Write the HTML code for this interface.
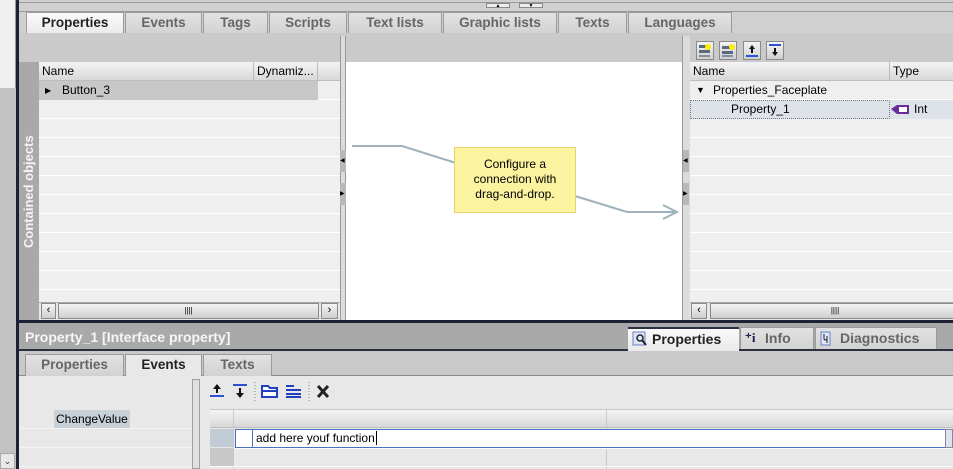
<!DOCTYPE html>
<html><head><meta charset="utf-8"><style>
*{margin:0;padding:0;box-sizing:border-box}
body{width:953px;height:469px;overflow:hidden;background:#d4d4d4;font-family:"Liberation Sans",Tahoma,sans-serif;font-size:12px;color:#000;position:relative}
.a{position:absolute}
.tab{position:absolute;height:22px;border:1px solid #9a9a9a;border-bottom:none;background:linear-gradient(#e2e2e2,#d2d2d2);color:#666;font-weight:bold;font-size:13.5px;text-align:center;line-height:20px}
.tab.on{background:linear-gradient(#fafafa,#eaeaea);color:#222}
.rows{background-color:#efefef;background-image:repeating-linear-gradient(to bottom,transparent 0,transparent 18px,#fff 18px,#fff 19px)}
.hdr{background:linear-gradient(#f4f4f4,#d8d8d8);border-bottom:1px solid #bdbdbd;font-size:12px;line-height:18px}
.btn{position:absolute;width:18px;height:19px;border:1px solid #8a8a8a;background:linear-gradient(#f4f4f4,#cfcfcf)}
</style></head><body>
<div class="a" style="left:0;top:0;width:16px;height:88px;background:#f0f0f0;border-right:1px solid #999"></div>
<div class="a" style="left:0;top:88px;width:16px;height:381px;background:#c2c2c2"></div>
<div class="a" style="left:0;top:453px;width:15px;height:16px;background:#e8e8e8;border:1px solid #aaa;font-size:9px;text-align:center;line-height:14px;color:#333">⌄</div>
<div class="a" style="left:16px;top:0;width:3px;height:469px;background:#1c2233"></div>
<div class="a" style="left:19px;top:0;width:934px;height:12px;background:#d0d0d0;border-bottom:1px solid #999"></div>
<div class="a" style="left:19px;top:2px;width:934px;height:1px;background:#999"></div>
<div class="a" style="left:486px;top:3px;width:24px;height:5px;border:1px solid #888;background:#eee;font-size:5px;text-align:center;line-height:4px">▲</div>
<div class="a" style="left:519px;top:3px;width:24px;height:5px;border:1px solid #888;background:#eee;font-size:5px;text-align:center;line-height:4px">▼</div>
<div class="a" style="left:19px;top:12px;width:934px;height:22px;background:#d0d0d0"></div>
<div class="tab on" style="left:26px;top:12px;width:98px;height:22px">Properties</div>
<div class="tab" style="left:125px;top:12px;width:77px">Events</div>
<div class="tab" style="left:203px;top:12px;width:65px">Tags</div>
<div class="tab" style="left:269px;top:12px;width:78px">Scripts</div>
<div class="tab" style="left:348px;top:12px;width:94px">Text lists</div>
<div class="tab" style="left:443px;top:12px;width:114px">Graphic lists</div>
<div class="tab" style="left:558px;top:12px;width:69px">Texts</div>
<div class="tab" style="left:628px;top:12px;width:104px">Languages</div>
<div class="a" style="left:19px;top:33px;width:934px;height:29px;background:#cacaca"></div>
<div class="a" style="left:19px;top:62px;width:20px;height:258px;background:#a9a9a9"></div>
<div class="a" style="left:19px;top:248px;height:20px;transform-origin:0 0;transform:rotate(-90deg);white-space:nowrap;color:#f4f4f4;font-weight:bold;font-size:13px;line-height:20px;width:130px">Contained objects</div>
<div class="a hdr" style="left:39px;top:62px;width:301px;height:19px"></div>
<div class="a" style="left:42px;top:62px;line-height:19px">Name</div>
<div class="a" style="left:253px;top:62px;width:65px;height:19px;border-left:1px solid #bbb;border-right:1px solid #bbb;padding-left:3px;line-height:19px">Dynamiz...</div>
<div class="a rows" style="left:39px;top:81px;width:301px;height:221px"></div>
<div class="a" style="left:39px;top:81px;width:279px;height:19px;background:#c8c8c8"></div>
<div class="a" style="left:45px;top:81px;line-height:19px;font-size:8px">▶</div>
<div class="a" style="left:62px;top:81px;line-height:19px">Button_3</div>
<div class="a" style="left:39px;top:302px;width:301px;height:18px;background:#e8e8e8;border-top:1px solid #aaa"></div>
<div class="btn" style="left:41px;top:303px;width:15px;height:16px;font-size:11px;line-height:13px;text-align:center">‹</div>
<div class="btn" style="left:58px;top:303px;width:261px;height:16px;font-size:8px;line-height:14px;text-align:center">||||</div>
<div class="btn" style="left:321px;top:303px;width:17px;height:16px;font-size:11px;line-height:13px;text-align:center">›</div>
<div class="a" style="left:340px;top:36px;width:6px;height:284px;background:#dcdcdc;border-left:1px solid #999;border-right:1px solid #999"></div>
<div class="a" style="left:340px;top:150px;width:6px;height:22px;background:#b8b8b8;font-size:6px;line-height:22px">◀</div>
<div class="a" style="left:340px;top:183px;width:6px;height:22px;background:#b8b8b8;font-size:6px;line-height:22px">▶</div>
<div class="a" style="left:346px;top:62px;width:336px;height:258px;background:#fff"></div>
<svg class="a" style="left:346px;top:62px" width="336" height="258">
<polyline points="6,84 56,84 110,101" fill="none" stroke="#9fb2bc" stroke-width="2"/>
<polyline points="229,134 281,150 331,150" fill="none" stroke="#9fb2bc" stroke-width="2"/>
<polyline points="317,143 331,150 317,157" fill="none" stroke="#9fb2bc" stroke-width="2"/>
</svg>
<div class="a" style="left:454px;top:147px;width:122px;height:66px;background:#fcf3a0;border:1px solid #e2d56a;text-align:center;font-size:12px;line-height:15px;padding-top:9px">Configure a<br>connection with<br>drag-and-drop.</div>
<div class="a" style="left:682px;top:36px;width:8px;height:284px;background:#dcdcdc;border-left:1px solid #999"></div>
<div class="a" style="left:683px;top:150px;width:6px;height:22px;background:#b8b8b8;font-size:6px;line-height:22px">◀</div>
<div class="a" style="left:683px;top:183px;width:6px;height:22px;background:#b8b8b8;font-size:6px;line-height:22px">▶</div>
<div class="btn" style="left:696px;top:41px"><svg width="16" height="17"><rect x="2" y="3" width="11" height="3" fill="#5a6a80"/><rect x="2" y="8" width="11" height="3" fill="#5a6a80"/><rect x="2" y="13" width="11" height="2" fill="#8090a0"/><circle cx="11" cy="5" r="3" fill="#ffee00"/></svg></div>
<div class="btn" style="left:719px;top:41px"><svg width="16" height="17"><rect x="2" y="4" width="8" height="3" fill="#5a6a80"/><rect x="2" y="9" width="11" height="3" fill="#5a6a80"/><rect x="2" y="13" width="11" height="2" fill="#8090a0"/><circle cx="12" cy="5" r="3" fill="#ffee00"/></svg></div>
<div class="btn" style="left:743px;top:41px"><svg width="16" height="17"><path d="M8 3L5 7H7V11H9V7H11Z" fill="#111"/><rect x="2" y="13" width="12" height="2" fill="#3050d0"/></svg></div>
<div class="btn" style="left:766px;top:41px"><svg width="16" height="17"><rect x="2" y="2" width="12" height="2" fill="#3050d0"/><path d="M8 14L5 10H7V6H9V10H11Z" fill="#111"/></svg></div>
<div class="a hdr" style="left:690px;top:62px;width:263px;height:19px"></div>
<div class="a" style="left:693px;top:62px;line-height:19px">Name</div>
<div class="a" style="left:889px;top:62px;width:64px;height:19px;border-left:1px solid #bbb;padding-left:3px;line-height:19px">Type</div>
<div class="a rows" style="left:690px;top:81px;width:263px;height:221px"></div>
<div class="a" style="left:696px;top:81px;line-height:19px;font-size:9px">▼</div>
<div class="a" style="left:713px;top:81px;line-height:19px">Properties_Faceplate</div>
<div class="a" style="left:690px;top:100px;width:263px;height:19px;background:#dde3e9"></div>
<div class="a" style="left:690px;top:100px;width:200px;height:19px;border:1px dotted #777"></div>
<div class="a" style="left:731px;top:100px;line-height:19px">Property_1</div>
<svg class="a" style="left:891px;top:104px" width="20" height="11"><path d="M0 5L6 1H18V10H6Z" fill="#6a2a9a"/><rect x="8" y="3" width="8" height="5" fill="#fff"/></svg>
<div class="a" style="left:914px;top:100px;line-height:19px">Int</div>
<div class="a" style="left:690px;top:302px;width:263px;height:18px;background:#e8e8e8;border-top:1px solid #aaa"></div>
<div class="btn" style="left:691px;top:303px;width:16px;height:16px;font-size:11px;line-height:13px;text-align:center">‹</div>
<div class="btn" style="left:710px;top:303px;width:250px;height:16px;font-size:8px;line-height:14px;text-align:center">||||</div>
<div class="a" style="left:19px;top:320px;width:934px;height:3px;background:#1c2233"></div>
<div class="a" style="left:19px;top:323px;width:934px;height:27px;background:#a9a9a9"></div>
<div class="a" style="left:25px;top:325px;color:#f6f6f6;font-weight:bold;font-size:14px;line-height:24px">Property_1 [Interface property]</div>
<div class="a" style="left:19px;top:349px;width:934px;height:2px;background:#2a3042"></div>
<div class="tab on" style="left:628px;top:327px;width:111px;height:24px;border:none;border-top:2px solid #2a3042;font-size:14px;text-align:left;padding-left:24px;line-height:21px">Properties</div>
<svg class="a" style="left:632px;top:331px" width="16" height="16"><rect x="1" y="1" width="12" height="13" fill="#dde6f8" stroke="#6a80c0"/><circle cx="8" cy="7" r="3" fill="none" stroke="#222" stroke-width="1.5"/><path d="M10 9L14 14" stroke="#222" stroke-width="2"/></svg>
<div class="tab" style="left:740px;top:327px;width:74px;height:22px;font-size:14px;text-align:left;padding-left:24px;color:#666">Info</div>
<div class="a" style="left:745px;top:330px;font-weight:bold;font-size:13px;color:#1a2050;font-family:'Liberation Serif',serif">⁺i</div>
<div class="tab" style="left:815px;top:327px;width:122px;height:22px;font-size:14px;text-align:left;padding-left:24px;color:#666">Diagnostics</div>
<svg class="a" style="left:820px;top:331px" width="12" height="16"><rect x="1" y="1" width="9" height="13" fill="#dde6f8" stroke="#6a80c0"/><path d="M4 3V8Q5 10 7 8V5M7 8V12" stroke="#222" fill="none"/></svg>
<div class="a" style="left:19px;top:351px;width:934px;height:25px;background:#c9c9c9;border-bottom:1px solid #8a8a8a"></div>
<div class="tab" style="left:25px;top:354px;width:99px;height:22px">Properties</div>
<div class="tab on" style="left:125px;top:354px;width:77px;height:23px;background:#e8e8e8">Events</div>
<div class="tab" style="left:203px;top:354px;width:69px;height:22px">Texts</div>
<div class="a" style="left:19px;top:376px;width:934px;height:93px;background:#e8e8e8"></div>
<div class="a" style="left:19px;top:410px;width:174px;height:59px;background-image:repeating-linear-gradient(to bottom,transparent 0,transparent 18px,#f4f4f4 18px,#f4f4f4 19px)"></div>
<div class="a" style="left:54px;top:410px;width:76px;height:18px;background:#c8d0d8;line-height:18px;padding-left:2px">ChangeValue</div>
<div class="a" style="left:192px;top:379px;width:8px;height:90px;background:#e0e0e0;border:1px solid #a0a0a0"></div>
<svg class="a" style="left:208px;top:382px" width="130" height="20">
<path d="M9 2L5 7H8V11H10V7H13Z" fill="#111"/><rect x="2" y="13" width="14" height="2" fill="#3050d0"/>
<rect x="25" y="2" width="14" height="2" fill="#3050d0"/><path d="M32 16L28 11H31V6H33V11H36Z" fill="#111"/>
<line x1="47" y1="0" x2="47" y2="20" stroke="#888" stroke-dasharray="1,2"/>
<path d="M54 4H60L62 6H69V15H54Z" fill="#fff" stroke="#2040c0" stroke-width="2"/><rect x="55" y="8" width="13" height="2" fill="#2040c0"/>
<rect x="78" y="3" width="8" height="2" fill="#2040c0"/><rect x="78" y="7" width="15" height="2" fill="#2040c0"/><rect x="78" y="11" width="15" height="2" fill="#2040c0"/><rect x="78" y="14" width="15" height="2" fill="#2040c0"/>
<line x1="101" y1="0" x2="101" y2="20" stroke="#888" stroke-dasharray="1,2"/>
<path d="M110 4L120 15M120 4L110 15" stroke="#222" stroke-width="3"/>
</svg>
<div class="a hdr" style="left:210px;top:409px;width:743px;height:19px;border-top:1px solid #c8c8c8"></div>
<div class="a" style="left:233px;top:409px;width:1px;height:60px;background:#c8c8c8"></div>
<div class="a" style="left:606px;top:409px;width:1px;height:60px;background:#c8c8c8"></div>
<div class="a" style="left:210px;top:429px;width:23px;height:18px;background:#c2ccd6"></div>
<div class="a" style="left:210px;top:448px;width:23px;height:18px;background:#c8c8c8"></div>
<div class="a" style="left:234px;top:448px;width:719px;height:1px;background:#f8f8f8"></div>
<div class="a" style="left:210px;top:466px;width:743px;height:1px;background:#f8f8f8"></div>
<div class="a" style="left:235px;top:429px;width:712px;height:19px;background:#fff;border:1px solid #4a70c0"></div>
<div class="a" style="left:252px;top:430px;width:1px;height:17px;background:#4a70c0"></div>
<div class="a" style="left:256px;top:429px;line-height:18px">add here youf function<span style="border-left:1px solid #000;margin-left:1px"></span></div>
<div class="a" style="left:945px;top:429px;width:8px;height:19px;background:#dde4f0;border:1px solid #889"></div>
</body></html>
